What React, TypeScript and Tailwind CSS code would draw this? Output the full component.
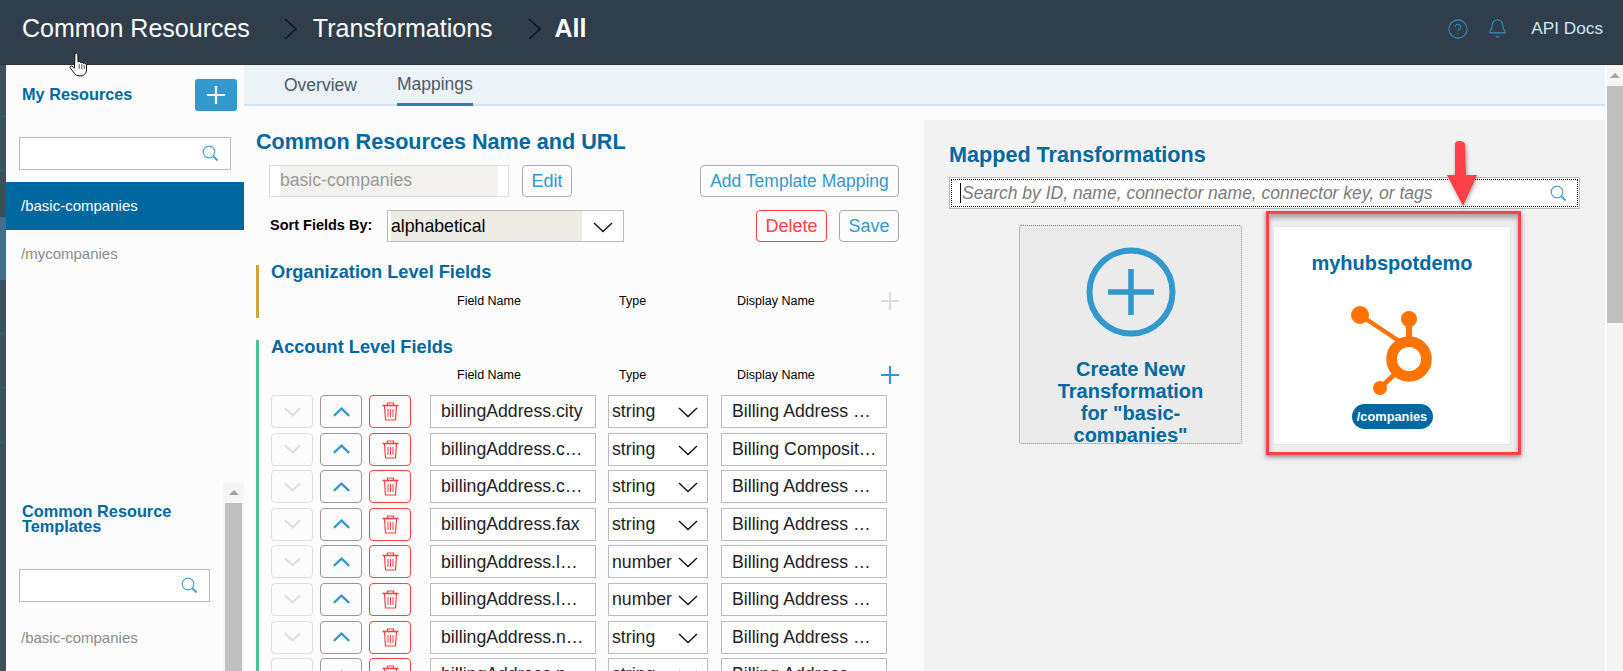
import React from "react";
import { Bell, CircleHelp } from "lucide-react";

const rows: [string, string, string][] = [
  ["billingAddress.city", "string", "Billing Address …"],
  ["billingAddress.c…", "string", "Billing Composit…"],
  ["billingAddress.c…", "string", "Billing Address …"],
  ["billingAddress.fax", "string", "Billing Address …"],
  ["billingAddress.l…", "number", "Billing Address …"],
  ["billingAddress.l…", "number", "Billing Address …"],
  ["billingAddress.n…", "string", "Billing Address …"],
  ["billingAddress.p…", "string", "Billing Address …"],
];

function Chevron({ className, up, w = 20, h = 11, sw = 1.6 }: { className?: string; up?: boolean; w?: number; h?: number; sw?: number }) {
  return (
    <svg width={w} height={h} viewBox="0 0 20 11" fill="none" className={className}>
      <path d={up ? "M1 10 L10 1.5 L19 10" : "M1 1 L10 9.5 L19 1"} stroke="currentColor" strokeWidth={sw} />
    </svg>
  );
}

function SearchIcon({ className }: { className?: string }) {
  return (
    <svg width="17" height="17" viewBox="0 0 17 17" fill="none" className={className}>
      <circle cx="7" cy="7" r="5.8" stroke="#4aa3d3" strokeWidth="1.2" />
      <path d="M11 11 L15.5 15.5" stroke="#4aa3d3" strokeWidth="2" />
    </svg>
  );
}

function PlusIcon({ className }: { className?: string }) {
  return (
    <svg width="18" height="18" viewBox="0 0 18 18" className={className}>
      <path d="M0 9 H18 M9 0 V18" stroke="currentColor" strokeWidth="2.2" />
    </svg>
  );
}

function Trash() {
  return (
    <svg width="17" height="19" viewBox="0 0 17 19" fill="none" className="text-[#ff4048]">
      <path d="M0.5 3.5 H16.5" stroke="currentColor" strokeWidth="1.6" />
      <path d="M5.5 3 V1 H11.5 V3" stroke="currentColor" strokeWidth="1.2" />
      <path d="M2.5 4 L3.5 18 H13.5 L14.5 4" stroke="currentColor" strokeWidth="1.2" />
      <path d="M6 7 V15 M8.5 7 V15 M11 7 V15" stroke="currentColor" strokeWidth="1" />
    </svg>
  );
}

function Row({ field, type, display }: { field: string; type: string; display: string }) {
  return (
    <div className="flex h-[33px] mb-[4.6px] shrink-0 items-stretch">
      <button className="w-[42px] mr-[7px] flex items-center justify-center rounded-[4px] border border-[#dddddd] text-[#dddddd]">
        <Chevron w={17} h={10} sw={2.4} />
      </button>
      <button className="w-[42px] mr-[7px] flex items-center justify-center rounded-[4px] border border-[#999999] text-[#3398cc]">
        <Chevron up w={17} h={10} sw={2.6} />
      </button>
      <button className="w-[42px] mr-[19px] flex items-center justify-center rounded-[4px] border border-[#ff4048]">
        <Trash />
      </button>
      <div className="w-[166px] mr-[12px] border border-[#bbbbbb] pl-[10px] flex items-center bg-white text-[17.7px] text-[#222] whitespace-nowrap overflow-hidden">
        {field}
      </div>
      <div className="w-[100px] mr-[13px] border border-[#bbbbbb] pl-[3px] pr-[9px] flex items-center justify-between bg-white text-[17.7px] text-[#222]">
        <span>{type}</span>
        <Chevron className="text-[#111] mt-[2px]" sw={1.4} />
      </div>
      <div className="w-[166px] border border-[#bbbbbb] pl-[10px] flex items-center bg-white text-[17.7px] text-[#222] whitespace-nowrap overflow-hidden">
        {display}
      </div>
    </div>
  );
}

function ColumnHeads({ plus }: { plus: string }) {
  return (
    <div className="flex h-[16px] items-center pl-[186px] text-[12.5px] text-black">
      <span className="w-[162px]">Field Name</span>
      <span className="w-[118px]">Type</span>
      <span className="w-[144px]">Display Name</span>
      <PlusIcon className={plus} />
    </div>
  );
}

export default function App() {
  return (
    <div
      className="relative w-[1623px] h-[671px] overflow-hidden flex flex-col bg-white"
      style={{ fontFamily: '"Liberation Sans", Arial, sans-serif' }}
    >
      {/* Header */}
      <header className="h-[65px] shrink-0 bg-[#2f3e4a] border-b border-[#26323c] flex items-center pb-[7px] text-white">
        <span className="ml-[22px] text-[25px]">Common Resources</span>
        <svg width="13" height="22" viewBox="0 0 13 22" fill="none" className="ml-[34px] text-[#10181f]">
          <path d="M1 1 L12 11 L1 21" stroke="currentColor" strokeWidth="1.6" />
        </svg>
        <span className="ml-[16px] text-[25px]">Transformations</span>
        <svg width="13" height="22" viewBox="0 0 13 22" fill="none" className="ml-[35px] text-[#10181f]">
          <path d="M1 1 L12 11 L1 21" stroke="currentColor" strokeWidth="1.6" />
        </svg>
        <span className="ml-[14px] text-[25px] font-bold">All</span>
        <div className="ml-auto flex items-center pr-[20px] pt-[1px]">
          <CircleHelp size={22} strokeWidth={1.2} className="text-[#2f8fc4]" />
          <Bell size={21} strokeWidth={1.3} className="ml-[18px] text-[#2f8fc4]" />
          <span className="ml-[23px] text-[17.2px] text-[#cfe6f5]">API Docs</span>
        </div>
      </header>

      <div className="flex-1 flex min-h-0">
        {/* Left strip */}
        <div className="w-[6px] shrink-0 flex flex-col bg-[#3c505e]">
          <div className="h-[52px] border-b border-[#456273]" />
          <div className="h-[54px] border-b border-[#456273]" />
          <div className="h-[46px]" />
          <div className="h-[63px] bg-[#3f6e8e]" />
          <div className="h-[54px] border-b border-[#456273]" />
          <div className="h-[54px] border-b border-[#456273]" />
          <div className="h-[55px] border-b border-[#456273]" />
        </div>

        {/* Sidebar */}
        <aside className="w-[238px] shrink-0 bg-[#fcfcfc] flex flex-col">
          <div className="flex items-center justify-between pt-[14px] pl-[16px] pr-[7px]">
            <span className="text-[16.3px] font-bold text-[#00689f] mt-[-2px]">My Resources</span>
            <button className="w-[42px] h-[32px] rounded-[3px] bg-[#3398cc] text-white flex items-center justify-center">
              <PlusIcon />
            </button>
          </div>
          <div className="mt-[26px] ml-[13px] w-[212px] h-[33px] border border-[#bbbbbb] bg-white flex items-center justify-end pr-[11px]">
            <SearchIcon />
          </div>
          <div className="mt-[12px] h-[48px] bg-[#00689f] text-white flex items-center pl-[15px] pt-[1px] text-[15px]">/basic-companies</div>
          <div className="h-[48px] text-[#8a8a8a] flex items-center pl-[15px] pt-[1px] text-[15px]">/mycompanies</div>

          <div className="mt-auto h-[189px] flex">
            <div className="w-[217px]">
              <div className="pt-[22px] pl-[16px] text-[16.3px] leading-[15px] font-bold text-[#00689f]">
                Common Resource
                <br />
                Templates
              </div>
              <div className="mt-[35px] ml-[13px] w-[191px] h-[33px] border border-[#bbbbbb] bg-white flex items-center justify-end pr-[11px]">
                <SearchIcon />
              </div>
              <div className="mt-[12px] h-[48px] text-[#8a8a8a] flex items-center pl-[15px] pt-[1px] text-[15px]">/basic-companies</div>
            </div>
            <div className="w-[21px] bg-[#f5f5f5] flex flex-col items-center">
              <div className="h-[21px] flex items-center justify-center">
                <div className="w-0 h-0 border-x-[5px] border-x-transparent border-b-[5px] border-b-[#a3a3a3]" />
              </div>
              <div className="flex-1 w-[17px] bg-[#c0c0c0]" />
            </div>
          </div>
        </aside>

        {/* Main */}
        <main className="flex-1 flex flex-col min-w-0 bg-[#fcfcfc] mr-[2px]">
          <nav className="h-[41px] shrink-0 bg-[#ebf3f7] border-b-[2px] border-[#cfe2f0] flex text-[17.5px] text-[#4a5a66]">
            <div className="ml-[40px] h-[40px] flex items-center">Overview</div>
            <div className="ml-[40px] h-[41px] flex items-center border-b-[3px] border-[#2a7fb0]">Mappings</div>
          </nav>

          <div className="flex-1 flex min-h-0">
            {/* Left column */}
            <section className="w-[680px] shrink-0 pl-[12px] overflow-hidden">
              <h2 className="mt-[24px] h-[24px] leading-[24px] text-[21.6px] font-bold text-[#00689f]">Common Resources Name and URL</h2>

              <div className="mt-[11px] flex h-[32px] pl-[13px] pr-[25px]">
                <div className="w-[240px] border border-[#dddddd] bg-white px-[10px]">
                  <div className="h-full bg-[#f2f1ed] text-[#999999] text-[17.6px] pb-[1px] flex items-center">basic-companies</div>
                </div>
                <button className="ml-[13px] w-[50px] rounded-[4px] border border-[#a9a9a9] text-[18px] text-[#3398cc]">Edit</button>
                <button className="ml-auto w-[199px] rounded-[4px] border border-[#a9a9a9] text-[17.5px] text-[#3398cc]">Add Template Mapping</button>
              </div>

              <div className="mt-[13px] flex h-[32px] items-stretch pl-[14px] pr-[25px]">
                <span className="w-[117px] flex items-center text-[14.5px] font-bold text-black">Sort Fields By:</span>
                <div className="w-[237px] border border-[#bbbbbb] bg-white pl-[3px] flex items-stretch">
                  <div className="w-[191px] bg-[#ecece4] text-[17.7px] text-black flex items-center">alphabetical</div>
                  <div className="flex-1 flex items-center justify-center">
                    <Chevron className="text-[#111] mt-[2px]" sw={1.4} />
                  </div>
                </div>
                <button className="ml-auto w-[71px] rounded-[4px] border border-[#ff4048] text-[18px] text-[#ff4048]">Delete</button>
                <button className="ml-[12px] w-[60px] rounded-[4px] border border-[#a9a9a9] text-[18px] text-[#3398cc]">Save</button>
              </div>

              <div className="mt-[23px] border-l-[3px] border-[#d0a244] pl-[12px] h-[53px]">
                <h3 className="text-[18.2px] leading-[14px] font-bold text-[#00689f]">Organization Level Fields</h3>
                <div className="mt-[14px]">
                  <ColumnHeads plus="text-[#dddddd]" />
                </div>
              </div>

              <div className="mt-[22px] border-l-[3px] border-[#4fc09e] pl-[12px] h-[400px]">
                <h3 className="text-[18.2px] leading-[14px] font-bold text-[#00689f]">Account Level Fields</h3>
                <div className="mt-[13px]">
                  <ColumnHeads plus="text-[#3398cc]" />
                </div>
                <div className="mt-[12px] flex flex-col">
                  {rows.map((r, i) => (
                    <Row key={i} field={r[0]} type={r[1]} display={r[2]} />
                  ))}
                </div>
              </div>
            </section>

            {/* Right column */}
            <section className="flex-1 mt-[14px] bg-[#f2f2f2] min-w-0 pl-[25px] pr-[25px] overflow-hidden">
              <h2 className="mt-[23px] h-[24px] leading-[24px] text-[21.6px] font-bold text-[#00689f]">Mapped Transformations</h2>
              <div className="mt-[10px] h-[32px] border border-[#bbbbbb] bg-white p-[1px]">
                <div className="h-full border border-dotted border-black flex items-center pl-[8px] pr-[10px]">
                  <span className="w-[1px] h-[20px] bg-black mr-[1px]" />
                  <span className="text-[17.5px] italic text-[#7a7a7a]">Search by ID, name, connector name, connector key, or tags</span>
                  <SearchIcon className="ml-auto" />
                </div>
              </div>

              <div className="mt-[16px] flex pl-[70px]">
                <div className="w-[223px] h-[219px] border border-dotted border-[#8a8a8a] rounded-[2px] bg-[#ebebeb] flex flex-col items-center overflow-hidden">
                  <svg width="90" height="90" viewBox="0 0 90 90" fill="none" className="mt-[21px] shrink-0 text-[#3398cc]">
                    <circle cx="45" cy="45" r="41.5" stroke="currentColor" strokeWidth="6" />
                    <path d="M22 45 H68 M45 22 V68" stroke="currentColor" strokeWidth="5.5" />
                  </svg>
                  <p className="mt-[21px] w-[165px] text-center text-[20px] leading-[22px] font-bold text-[#00689f]">
                    Create New Transformation for "basic-companies"
                  </p>
                </div>

                <div className="ml-[24px] mt-[-14px] w-[255px] h-[244px] border-[3px] border-[#ff4048] bg-[#eeeeee] shadow-[0_2px_5px_rgba(0,0,0,0.45),inset_0_4px_5px_rgba(0,0,0,0.3)] pt-[12px] pl-[4px]">
                  <div className="w-[238px] h-[219px] bg-white border border-[#e5e5e5] rounded-[2px] flex flex-col items-center">
                    <span className="mt-[25px] text-[20px] leading-[22px] font-bold text-[#00689f]">myhubspotdemo</span>
                    <svg width="90" height="92" viewBox="0 0 90 92" className="mt-[31px] shrink-0 ml-[6px]">
                      <g fill="none" stroke="#ff7300">
                        <circle cx="59" cy="54" r="17.4" strokeWidth="10.7" />
                        <path d="M10 10 L52 38" strokeWidth="4.5" />
                        <path d="M59 14 V36" strokeWidth="6" />
                        <path d="M30 83 L46 68" strokeWidth="5" />
                      </g>
                      <circle cx="10" cy="10" r="9" fill="#ff7300" />
                      <circle cx="59" cy="14" r="8" fill="#ff7300" />
                      <circle cx="30" cy="83" r="7" fill="#ff7300" />
                    </svg>
                    <span className="mt-[7px] w-[81px] h-[25px] rounded-full bg-[#00689f] text-white text-[12.8px] font-bold flex items-center justify-center">/companies</span>
                  </div>
                </div>
              </div>
            </section>
          </div>
        </main>

        {/* Page scrollbar */}
        <div className="w-[16px] shrink-0 bg-[#f5f5f5] flex flex-col items-center">
          <div className="h-[21px] flex items-center justify-center">
            <div className="w-0 h-0 border-x-[5px] border-x-transparent border-b-[5px] border-b-[#a3a3a3]" />
          </div>
          <div className="w-[16px] h-[237px] bg-[#c0c0c0]" />
        </div>
      </div>

      {/* Annotation arrow */}
      <svg width="40" height="76" viewBox="0 0 40 76" className="absolute left-[1442px] top-[136px]" style={{ filter: "drop-shadow(1px 2px 2px rgba(0,0,0,.35))" }}>
        <path d="M13 8 Q13 5 17 5 Q22 5 23 8 L24 39 L35 39 L21 70 L5 39 L13 39 Z" fill="#ff4048" />
      </svg>

      {/* Mouse cursor */}
      <svg width="20" height="25" viewBox="0 0 20 25" className="absolute left-[69px] top-[52px]">
        <path
          d="M6 1.5 Q7.8 0.5 8.8 2 L9 10 L10.5 9.5 L11.5 10.5 L13 10 L14.5 11.5 L16 11 L17.5 13 L17.5 19 Q16 24 11 24 Q7 24 5.5 21.5 L1 15.5 Q1 13.5 3 14 L5.5 16 Z"
          fill="#fff"
          stroke="#111"
          strokeWidth="1"
        />
        <path d="M10.2 12 V17 M12.8 12 V17 M15.2 13 V17" stroke="#111" strokeWidth="0.7" />
      </svg>
    </div>
  );
}
